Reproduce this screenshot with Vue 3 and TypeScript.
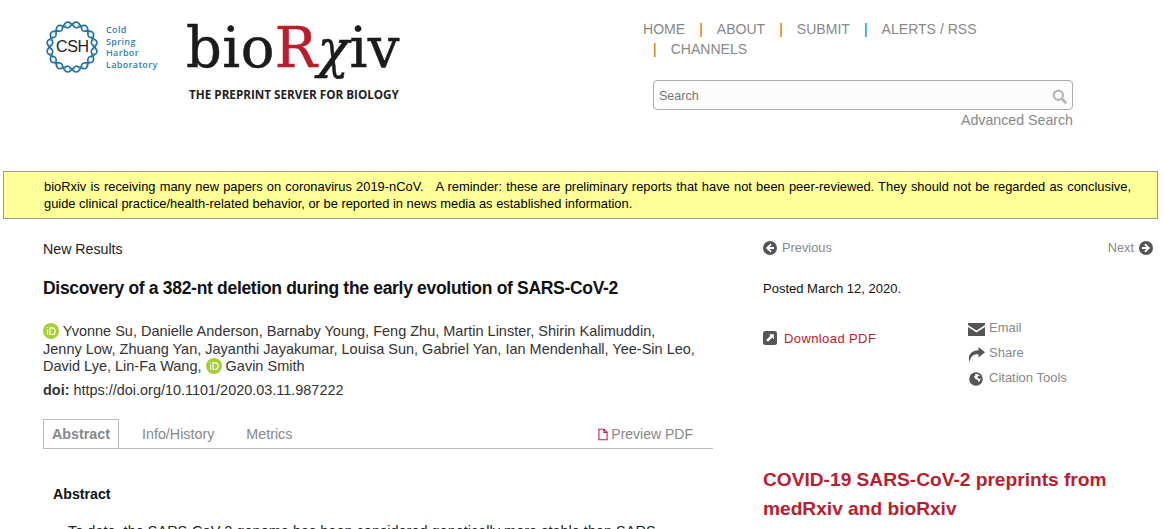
<script setup lang="ts">
const cx = 27, cy = 27, R = 22.5, amp = 2.8, waves = 8
function strand(phase: number): string {
  const pts: string[] = []
  for (let i = 0; i <= 240; i++) {
    const t = (i / 240) * Math.PI * 2
    const r = R + amp * Math.sin(waves * t + phase)
    pts.push(`${(cx + r * Math.cos(t)).toFixed(2)},${(cy + r * Math.sin(t)).toFixed(2)}`)
  }
  return 'M' + pts.join('L') + 'Z'
}
const strandA = strand(0)
const strandB = strand(Math.PI)
const rungs = Array.from({ length: 32 }, (_, i) => {
  const t = ((i + 0.5) / 32) * Math.PI * 2
  const r = Math.abs(amp * Math.sin(waves * t)) * 0.8
  return {
    x1: cx + (R - r) * Math.cos(t), y1: cy + (R - r) * Math.sin(t),
    x2: cx + (R + r) * Math.cos(t), y2: cy + (R + r) * Math.sin(t)
  }
})
const nav = ['ABOUT', 'SUBMIT', 'ALERTS / RSS']
const authors = 'Yvonne Su, Danielle Anderson, Barnaby Young, Feng Zhu, Martin Linster, Shirin Kalimuddin, Jenny Low, Zhuang Yan, Jayanthi Jayakumar, Louisa Sun, Gabriel Yan, Ian Mendenhall, Yee-Sin Leo, David Lye, Lin-Fa Wang,'
</script>

<template>
  <div class="page">
    <header class="header">
      <div class="logos">
        <div class="csh">
          <svg class="ring" width="54" height="54" viewBox="0 0 54 54" aria-hidden="true">
            <path :d="strandA" fill="none" stroke="#1f6fa6" stroke-width="1.6" />
            <path :d="strandB" fill="none" stroke="#1f6fa6" stroke-width="1.6" />
            <line v-for="(l, i) in rungs" :key="i" :x1="l.x1" :y1="l.y1" :x2="l.x2" :y2="l.y2" stroke="#1f6fa6" stroke-width="0.5" />
          </svg>
          <span class="csh-mark">CSH</span>
          <div class="csh-name">Cold<br />Spring<br />Harbor<br />Laboratory</div>
        </div>
        <div class="biorxiv">
          <div class="wordmark">bio<span class="red">R</span><span class="chi">χ</span>iv</div>
          <div class="tagline">THE PREPRINT SERVER FOR BIOLOGY</div>
        </div>
      </div>
      <div class="head-right">
        <nav class="nav">
          <a>HOME</a>
          <template v-for="(n, i) in nav" :key="n">
            <span class="sep" :class="{ blue: i === 2 }">|</span><a>{{ n }}</a>
          </template>
          <br />
          <span class="sep first">|</span><a>CHANNELS</a>
        </nav>
        <div class="search">
          <span>Search</span>
          <svg width="15" height="15" viewBox="0 0 15 15" aria-hidden="true">
            <circle cx="6.3" cy="6.3" r="4.6" fill="none" stroke="#b5b5b5" stroke-width="2.2" />
            <path d="M9.8 9.8 13.5 13.5" stroke="#b5b5b5" stroke-width="2.8" stroke-linecap="round" />
          </svg>
        </div>
        <div class="advanced">Advanced Search</div>
      </div>
    </header>

    <div class="banner">
      bioRxiv is receiving many new papers on coronavirus 2019-nCoV. &nbsp; A reminder: these are preliminary reports that have not been peer-reviewed. They should not be regarded as conclusive, guide clinical practice/health-related behavior, or be reported in news media as established information.
    </div>

    <main class="main">
      <section class="left">
        <div class="kind">New Results</div>
        <h1 class="title">Discovery of a 382-nt deletion during the early evolution of SARS-CoV-2</h1>
        <p class="authors">
          <svg class="orcid" width="16" height="16" viewBox="0 0 16 16" aria-hidden="true">
            <circle cx="8" cy="8" r="8" fill="#a6ce39" />
            <path d="M4.6 6.6v5M4.6 4.2v.9" stroke="#fff" stroke-width="1.1" fill="none" />
            <path d="M7 4.9v6.6h2.1c4 0 4-6.6 0-6.6z" stroke="#fff" stroke-width="1.1" fill="none" />
          </svg>
          {{ authors }}
          <svg class="orcid" width="16" height="16" viewBox="0 0 16 16" aria-hidden="true">
            <circle cx="8" cy="8" r="8" fill="#a6ce39" />
            <path d="M4.6 6.6v5M4.6 4.2v.9" stroke="#fff" stroke-width="1.1" fill="none" />
            <path d="M7 4.9v6.6h2.1c4 0 4-6.6 0-6.6z" stroke="#fff" stroke-width="1.1" fill="none" />
          </svg>
          Gavin Smith
        </p>
        <p class="doi"><b>doi:</b> https://doi.org/10.1101/2020.03.11.987222</p>
        <div class="tabs">
          <span class="tab active">Abstract</span>
          <span class="tab">Info/History</span>
          <span class="tab">Metrics</span>
          <span class="preview">
            <svg width="10" height="13" viewBox="0 0 11 13" aria-hidden="true">
              <path d="M1 .7h5.6L10 4v8.3H1zM6.4.7v3.5H10" fill="none" stroke="#c2185b" stroke-width="1.2" />
            </svg>
            Preview PDF
          </span>
        </div>
        <h2 class="abs-head">Abstract</h2>
        <p class="abs-body">To date, the SARS-CoV-2 genome has been considered genetically more stable than SARS-</p>
      </section>

      <aside class="right">
        <div class="pager">
          <span class="pg">
            <svg class="arrow" width="14" height="14" viewBox="0 0 14 14" aria-hidden="true">
              <path fill-rule="evenodd" fill="#555" d="M7 0a7 7 0 1 1 0 14A7 7 0 0 1 7 0zM7.4 2.6 3 7l4.4 4.4 1.3-1.3-2.2-2.2H11V6.100H6.500l2.200-2.200z" />
            </svg>
            Previous
          </span>
          <span class="pg">
            Next
            <svg class="arrow" width="14" height="14" viewBox="0 0 14 14" aria-hidden="true">
              <path fill-rule="evenodd" fill="#555" d="M7 0a7 7 0 1 0 0 14A7 7 0 0 0 7 0zM6.600 2.600 11 7l-4.400 4.400-1.300-1.300 2.200-2.200H3V6.100h4.500L5.300 3.900z" />
            </svg>
          </span>
        </div>
        <div class="posted">Posted March 12, 2020.</div>
        <div class="actions">
          <div class="download">
            <svg width="14" height="14" viewBox="0 0 14 14" aria-hidden="true">
              <path fill-rule="evenodd" fill="#555" d="M2.500 0h9A2.500 2.500 0 0 1 14 2.500v9a2.500 2.500 0 0 1-2.500 2.500h-9A2.500 2.500 0 0 1 0 11.500v-9A2.500 2.500 0 0 1 2.500 0zM6 3.200l1.500 1.500L3.200 9l1.800 1.800 4.300-4.300 1.500 1.500V3.200z" />
            </svg>
            <span>Download PDF</span>
          </div>
          <ul class="tools">
            <li>
              <svg width="17" height="13" viewBox="0 0 17 13" aria-hidden="true">
                <path fill="#555" d="M0 0h17v2L8.500 7.500 0 2zM0 4l8.500 5.500L17 4v9H0z" />
              </svg>
              Email
            </li>
            <li>
              <svg width="17" height="15" viewBox="0 0 17 15" aria-hidden="true">
                <path fill="#555" d="M10.500 0 17 5.300 10.500 10.500V7.300C6 7.200 3 8.500 1.500 15 -.5 9 2.500 3.500 10.500 3.300z" />
              </svg>
              Share
            </li>
            <li>
              <svg width="17" height="14" viewBox="0 0 17 14" aria-hidden="true">
                <circle cx="8" cy="7" r="6.800" fill="#555" />
                <path fill="#fff" d="M7 2.200c2-.6 4 .2 5 1.600l-2 .3-.6 1.900 2.400 1 .9-.9c0 2-1 3.400-2.300 4.200l-.4-2.200-2.600-1.200-1.600-2.300 1.500-.6z" />
              </svg>
              Citation Tools
            </li>
          </ul>
        </div>
        <h2 class="promo">COVID-19 SARS-CoV-2 preprints from medRxiv and bioRxiv</h2>
      </aside>
    </main>
  </div>
</template>

<style>
html, body { margin: 0; background: #fff; overflow: hidden; }
</style>

<style scoped>
.page {
  width: 1164px;
  height: 529px;
  overflow: hidden;
  font-family: "Liberation Sans", Arial, sans-serif;
  font-size: 14px;
  color: #333;
}
.header { display: flex; height: 171px; }
.logos { display: flex; width: 643px; padding: 20px 0 0 45px; box-sizing: border-box; }
.csh { position: relative; display: flex; width: 141px; height: 54px; }
.ring { flex: none; }
.csh-mark {
  position: absolute;
  left: 11px;
  top: 19px;
  font-size: 16px;
  line-height: 16px;
  color: #222;
  letter-spacing: -0.4px;
}
.csh-name {
  margin: 4px 0 0 7px;
  font-family: "Open Sans", sans-serif;
  font-size: 9px;
  line-height: 11.7px;
  font-weight: 600;
  letter-spacing: 0.35px;
  color: #2f7fb4;
}
.biorxiv { display: flex; flex-direction: column; width: 214px; }
.wordmark {
  height: 59px;
  margin-bottom: 0;
  font-family: "DejaVu Serif", serif;
  font-size: 56px;
  line-height: 56px;
  color: #1c1a1b;
  letter-spacing: 0.45px;
  white-space: nowrap;
  -webkit-text-stroke: 0.5px currentColor;
}
.red { color: #b81f2e; }
.chi { font-style: italic; font-size: 52px; }
.tagline {
  margin: 8px 0 0 3px;
  font-family: "Open Sans", sans-serif;
  font-size: 11.7px;
  line-height: 14px;
  font-weight: 700;
  white-space: nowrap;
  color: #222;
}
.head-right { width: 430px; padding-top: 19px; box-sizing: border-box; }
.nav { font-size: 14.05px; line-height: 20px; color: #888; }
.sep { margin: 0 14px; color: #b3671a; }
.sep.blue { color: #1a6a96; }
.sep.first { margin-left: 10px; }
.search {
  display: flex;
  align-items: center;
  justify-content: space-between;
  box-sizing: border-box;
  width: 420px;
  height: 30px;
  margin: 21px 0 0 10px;
  padding: 2px 5px 0;
  border: 1px solid #aaa;
  border-radius: 4px;
  background: #fcfcfc;
  font-size: 12.5px;
  color: #777;
}
.advanced { width: 420px; margin-left: 10px; text-align: right; font-size: 14.2px; line-height: 20px; color: #888; }
.banner {
  box-sizing: border-box;
  height: 48px;
  margin: 0 6px 0 3px;
  padding: 6px 26px 0 40px;
  border: 1px solid #999;
  background: #ffff99;
  font-size: 12.9px;
  line-height: 17px;
  text-align: justify;
  color: #000;
}
.main { display: flex; }
.left { width: 670px; margin-left: 43px; padding-top: 22px; }
.kind { font-size: 14.2px; line-height: 17px; color: #222; }
.title {
  margin: 19px 0 0;
  font-size: 17.5px;
  line-height: 22px;
  font-weight: 700;
  letter-spacing: -0.31px;
  color: #111;
}
.authors { max-width: 652px; margin: 24px 0 0; font-size: 14.5px; line-height: 17.5px; color: #333; }
.orcid { vertical-align: -3px; }
.doi { margin: 6.5px 0 0; font-size: 14.45px; line-height: 17.5px; }
.tabs {
  display: flex;
  align-items: stretch;
  height: 29px;
  margin-top: 19px;
  font-size: 14.3px;
  border-bottom: 1px solid #bbb;
  color: #888;
}
.tab { padding: 0 8px; margin-right: 14px; line-height: 29px; border: 1px solid transparent; border-bottom: 0; }
.tab.active { font-weight: 700; border-color: #bbb; }
.preview { display: flex; align-items: center; gap: 3px; margin-left: auto; padding: 2px 20px 0 0; font-size: 14px; }
.abs-head { margin: 37px 0 0 10px; font-size: 14.2px; line-height: 17px; font-weight: 700; color: #111; }
.abs-body { margin: 19px 0 0 25px; font-size: 14.5px; line-height: 18px; white-space: nowrap; color: #222; }
.right { width: 390px; margin-left: 50px; padding-top: 20px; }
.pager { display: flex; justify-content: space-between; line-height: 17px; font-size: 12.8px; color: #888; }
.pg { display: flex; align-items: center; gap: 5px; }
.posted { margin-top: 24px; font-size: 13px; line-height: 17px; color: #111; }
.actions { display: flex; margin-top: 23px; }
.download {
  display: flex;
  align-items: center;
  gap: 7px;
  width: 205px;
  height: 20px;
  margin-top: 8px;
  font-size: 13px;
  letter-spacing: 0.4px;
  color: #b9202f;
}
.tools { margin: -5px 0 0; padding: 0; list-style: none; font-size: 13px; color: #888; }
.tools li { display: flex; align-items: center; gap: 4px; height: 25px; }
.tools svg { margin-top: 3px; }
.promo {
  margin: 75px 0 0;
  font-size: 19.15px;
  line-height: 29px;
  font-weight: 700;
  color: #b8202f;
}
</style>
